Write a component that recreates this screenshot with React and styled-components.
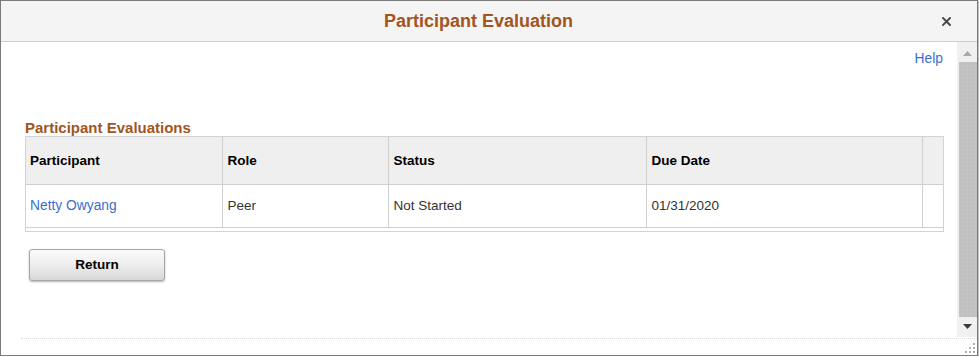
import React from 'react';
import styled, { createGlobalStyle } from 'styled-components';

const GlobalStyle = createGlobalStyle`
  html, body { margin: 0; padding: 0; background: #ffffff; }
  body { font-family: "Liberation Sans", Arial, sans-serif; }
  * { box-sizing: border-box; }
`;

const Dialog = styled.div`
  width: 978px;
  height: 356px;
  border: 1px solid #7a7a7a;
  display: flex;
  flex-direction: column;
  background: #ffffff;
  box-shadow: 1px 1px 1px rgba(0, 0, 0, 0.25);
`;

const Header = styled.header`
  flex: none;
  height: 41px;
  display: flex;
  align-items: center;
  background: #f4f4f4;
  border-bottom: 1px solid #cfcfcf;
`;

const Title = styled.h1`
  flex: 1;
  margin: 0;
  text-align: center;
  font-size: 18px;
  font-weight: bold;
  color: #a2551d;
`;

const CloseButton = styled.button`
  flex: none;
  width: 14px;
  height: 14px;
  margin: 0 24px 0 -17px;
  padding: 0;
  border: 0;
  background: none;
  display: flex;
  align-items: center;
  justify-content: center;
  cursor: pointer;
`;

const Main = styled.div`
  flex: 1;
  min-height: 0;
  display: flex;
`;

const Content = styled.main`
  flex: 1;
  padding: 8px 13px 0 24px;
  display: flex;
  flex-direction: column;
  align-items: stretch;
`;

const HelpRow = styled.div`
  display: flex;
  justify-content: flex-end;
  line-height: 18px;
  padding-right: 1px;
`;

const Link = styled.a`
  color: #3c6ecf;
  font-size: ${p => (p.$large ? '13.8px' : '13.5px')};
  text-decoration: none;
  cursor: pointer;
`;

const SectionTitle = styled.h2`
  margin: 51px 0 0;
  font-size: 15px;
  line-height: 17px;
  font-weight: bold;
  color: #a2551d;
`;

const TableBox = styled.div`
  border: 1px solid #d3d3d3;
  padding-bottom: 3px;
`;

const Table = styled.table`
  width: 100%;
  border-collapse: collapse;
  table-layout: fixed;
  font-size: 13.5px;
`;

const HeadCell = styled.th`
  height: 47px;
  padding: 0 5px 0 ${p => (p.$first ? '4px' : '5px')};
  text-align: left;
  font-weight: bold;
  color: #000000;
  background: #efefef;
  border-bottom: 1px solid #cfcfcf;
  border-right: ${p => (p.$last ? 'none' : '1px solid #cfcfcf')};
`;

const Cell = styled.td`
  height: 43px;
  padding: 0 5px 0 ${p => (p.$first ? '4px' : '5px')};
  color: #333333;
  border-bottom: 1px solid #cfcfcf;
  border-right: ${p => (p.$last ? 'none' : '1px solid #cfcfcf')};
`;

const ButtonRow = styled.div`
  display: flex;
  padding: 17px 0 0 4px;
`;

const ReturnButton = styled.button`
  width: 136px;
  height: 32px;
  border: 1px solid #a5a5a5;
  border-radius: 3px;
  background: linear-gradient(#fbfbfb, #efefef 45%, #d7d7d7);
  box-shadow: 0 1px 2px rgba(0, 0, 0, 0.3);
  font-family: "Liberation Sans", Arial, sans-serif;
  font-size: 13.5px;
  font-weight: bold;
  color: #000000;
  cursor: pointer;
`;

const Scrollbar = styled.div`
  flex: none;
  width: 20px;
  height: 295px;
  display: flex;
  flex-direction: column;
  background: #f0f0f0;
`;

const ScrollArrow = styled.div`
  flex: none;
  height: 20px;
  display: flex;
  align-items: center;
  justify-content: center;
  padding: ${p => (p.$down ? '0 0 1px 1px' : '2px 0 0 1px')};
`;

const Thumb = styled.div`
  flex: 1;
  margin-left: 2px;
  background-color: #c3c3c3;
  background-image: radial-gradient(#b7b7b7 0.6px, transparent 0.8px);
  background-size: 4px 4px;
`;

const Footer = styled.footer`
  flex: none;
  height: 17px;
  margin-left: 20px;
  border-top: 1px dotted #dadada;
  display: flex;
  justify-content: flex-end;
  align-items: flex-end;
  padding: 0 1px 1px 0;
`;

const columns = [
  { key: 'participant', label: 'Participant', width: 196 },
  { key: 'role', label: 'Role', width: 166 },
  { key: 'status', label: 'Status', width: 258 },
  { key: 'due', label: 'Due Date', width: 276 },
];

const rows = [
  { participant: 'Netty Owyang', role: 'Peer', status: 'Not Started', due: '01/31/2020' },
];

export default function App() {
  return (
    <>
      <GlobalStyle />
      <Dialog>
        <Header>
          <Title>Participant Evaluation</Title>
          <CloseButton aria-label="Close">
            <svg width="9" height="9" viewBox="0 0 9 9">
              <path d="M1 1 L8 8 M8 1 L1 8" stroke="#444" strokeWidth="1.9" strokeLinecap="square" />
            </svg>
          </CloseButton>
        </Header>
        <Main>
          <Content>
            <HelpRow>
              <Link $large>Help</Link>
            </HelpRow>
            <SectionTitle>Participant Evaluations</SectionTitle>
            <TableBox>
              <Table>
                <colgroup>
                  {columns.map(c => (
                    <col key={c.key} style={{ width: c.width }} />
                  ))}
                  <col />
                </colgroup>
                <thead>
                  <tr>
                    {columns.map((c, i) => (
                      <HeadCell key={c.key} $first={i === 0}>{c.label}</HeadCell>
                    ))}
                    <HeadCell $last />
                  </tr>
                </thead>
                <tbody>
                  {rows.map(r => (
                    <tr key={r.participant}>
                      <Cell $first><Link $large>{r.participant}</Link></Cell>
                      <Cell>{r.role}</Cell>
                      <Cell>{r.status}</Cell>
                      <Cell>{r.due}</Cell>
                      <Cell $last />
                    </tr>
                  ))}
                </tbody>
              </Table>
            </TableBox>
            <ButtonRow>
              <ReturnButton>Return</ReturnButton>
            </ButtonRow>
          </Content>
          <Scrollbar>
            <ScrollArrow>
              <svg width="9" height="5" viewBox="0 0 9 5">
                <polygon points="0,5 9,5 4.5,0" fill="#a9a9a9" />
              </svg>
            </ScrollArrow>
            <Thumb />
            <ScrollArrow $down>
              <svg width="9" height="5" viewBox="0 0 9 5">
                <polygon points="0,0 9,0 4.5,5" fill="#3a3a3a" />
              </svg>
            </ScrollArrow>
          </Scrollbar>
        </Main>
        <Footer>
          <svg width="12" height="12" viewBox="0 0 12 12">
            <rect x="9" y="1" width="2" height="2" fill="#b0b0b0" />
            <rect x="5" y="5" width="2" height="2" fill="#b0b0b0" />
            <rect x="9" y="5" width="2" height="2" fill="#b0b0b0" />
            <rect x="1" y="9" width="2" height="2" fill="#b0b0b0" />
            <rect x="5" y="9" width="2" height="2" fill="#b0b0b0" />
            <rect x="9" y="9" width="2" height="2" fill="#b0b0b0" />
          </svg>
        </Footer>
      </Dialog>
    </>
  );
}
